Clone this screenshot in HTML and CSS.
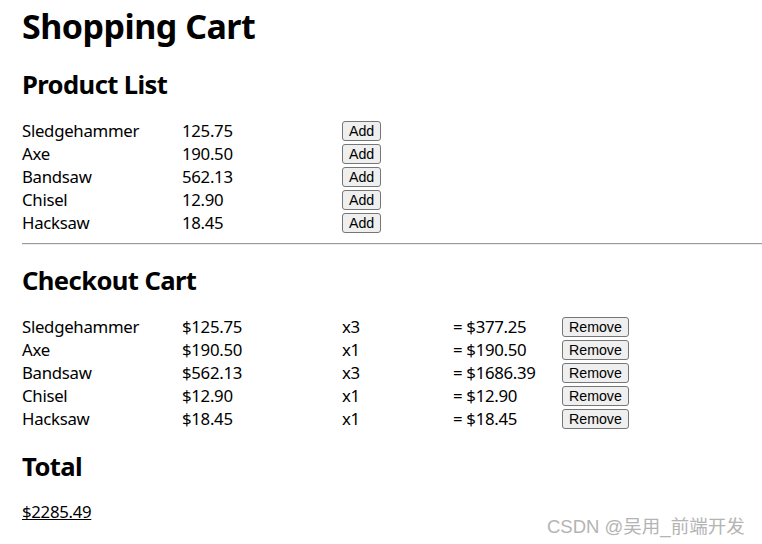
FILE: index.html
```html
<!DOCTYPE html>
<html>
<head>
<meta charset="utf-8">
<link rel="stylesheet" href="styles.css">
</head>
<body>
<div class="page">
  <h1 class="title">Shopping Cart</h1>
  <h2 class="section">Product List</h2>
  <div class="list products">
    <div class="row"><span>Sledgehammer</span><span>125.75</span><span><button class="btn">Add</button></span></div>
    <div class="row"><span>Axe</span><span>190.50</span><span><button class="btn">Add</button></span></div>
    <div class="row"><span>Bandsaw</span><span>562.13</span><span><button class="btn">Add</button></span></div>
    <div class="row"><span>Chisel</span><span>12.90</span><span><button class="btn">Add</button></span></div>
    <div class="row"><span>Hacksaw</span><span>18.45</span><span><button class="btn">Add</button></span></div>
  </div>
  <hr class="divider">
  <h2 class="section checkout-title">Checkout Cart</h2>
  <div class="list cart">
    <div class="row"><span>Sledgehammer</span><span>$125.75</span><span>x3</span><span>= $377.25</span><span><button class="btn">Remove</button></span></div>
    <div class="row"><span>Axe</span><span>$190.50</span><span>x1</span><span>= $190.50</span><span><button class="btn">Remove</button></span></div>
    <div class="row"><span>Bandsaw</span><span>$562.13</span><span>x3</span><span>= $1686.39</span><span><button class="btn">Remove</button></span></div>
    <div class="row"><span>Chisel</span><span>$12.90</span><span>x1</span><span>= $12.90</span><span><button class="btn">Remove</button></span></div>
    <div class="row"><span>Hacksaw</span><span>$18.45</span><span>x1</span><span>= $18.45</span><span><button class="btn">Remove</button></span></div>
  </div>
  <h2 class="section total-title">Total</h2>
  <p class="total"><u>$2285.49</u></p>
</div>
<div class="watermark">CSDN @吴用_前端开发</div>
</body>
</html>
```

FILE: styles.css
```css
html, body {
  margin: 0;
  padding: 0;
  background: #fff;
}
body {
  font-family: "Noto Sans", "Open Sans", sans-serif;
  font-size: 16.8px;
  letter-spacing: -0.3px;
  color: #000;
  position: relative;
  min-height: 544px;
}
.page {
  padding-left: 22px;
  padding-top: 6px;
}
.title {
  font-size: 34px;
  letter-spacing: -0.5px;
  line-height: 40px;
  font-weight: 700;
  margin: 0 0 24px 0;
}
.section {
  font-size: 25.6px;
  letter-spacing: -0.6px;
  line-height: 30px;
  font-weight: 700;
  margin: 0 0 19px 0;
}
.list {
  display: flex;
  flex-direction: column;
}
.row {
  display: grid;
  height: 23px;
  line-height: 23px;
  align-items: center;
}
.products .row {
  grid-template-columns: 160px 160px auto;
}
.cart .row {
  grid-template-columns: 160px 160px 111px 109px auto;
}
.btn {
  font-family: "Liberation Sans", Arial, sans-serif;
  font-size: 14.2px;
  letter-spacing: 0;
  line-height: 16px;
  height: 20px;
  padding: 1px 6px;
  background: #efefef;
  border: 1px solid #767676;
  border-radius: 3px;
  color: #000;
  display: block;
}
.divider {
  margin: 9px 0 21px 0;
  border: 0;
  border-top: 1px solid #9a9a9a;
  border-bottom: 1px solid #eeeeee;
  height: 0;
}
.total-title {
  margin-top: 22px;
  margin-bottom: 18px;
}
.total {
  margin: 0;
  line-height: 23px;
}
.watermark {
  position: absolute;
  left: 547px;
  top: 515px;
  font-family: "Liberation Sans", "Noto Sans CJK SC", sans-serif;
  font-size: 18.5px;
  letter-spacing: 0;
  color: #b4b4b4;
  line-height: 24px;
  white-space: nowrap;
}
```
